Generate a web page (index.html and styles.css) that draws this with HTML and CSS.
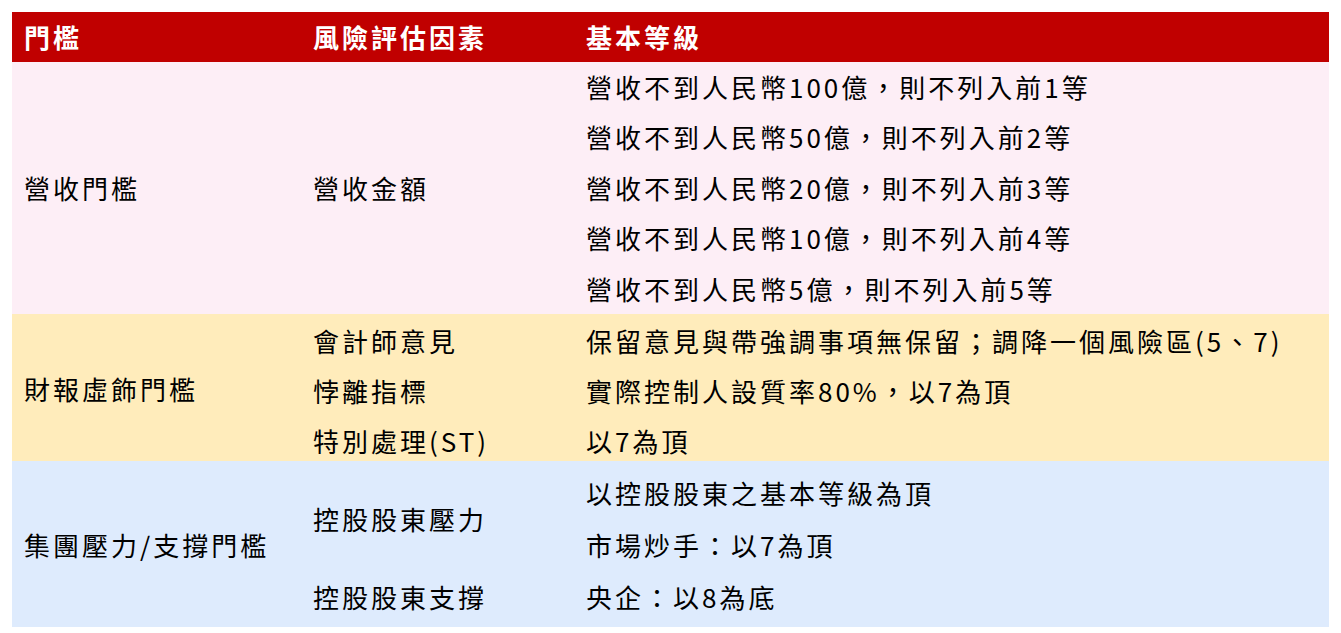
FILE: index.html
```html
<!DOCTYPE html>
<html lang="zh-Hant">
<head>
<meta charset="utf-8">
<title>門檻</title>
<link rel="stylesheet" href="styles.css">
</head>
<body>
<div class="table">
  <div class="sec head">
    <div class="cell c1">門檻</div>
    <div class="cell c2">風險評估因素</div>
    <div class="cell c3">基本等級</div>
  </div>
  <div class="sec pink">
    <div class="cell c1 span-all">營收門檻</div>
    <div class="cell c2 span-all">營收金額</div>
    <div class="cell c3">營收不到人民幣100億，則不列入前1等</div>
    <div class="cell c3">營收不到人民幣50億，則不列入前2等</div>
    <div class="cell c3">營收不到人民幣20億，則不列入前3等</div>
    <div class="cell c3">營收不到人民幣10億，則不列入前4等</div>
    <div class="cell c3">營收不到人民幣5億，則不列入前5等</div>
  </div>
  <div class="sec yellow">
    <div class="cell c1 span-all">財報虛飾門檻</div>
    <div class="cell c2 r1">會計師意見</div>
    <div class="cell c3 r1">保留意見與帶強調事項無保留；調降一個風險區(5、7)</div>
    <div class="cell c2 r2">悖離指標</div>
    <div class="cell c3 r2">實際控制人設質率80%，以7為頂</div>
    <div class="cell c2 r3">特別處理(ST)</div>
    <div class="cell c3 r3">以7為頂</div>
  </div>
  <div class="sec blue">
    <div class="cell c1 span-all">集團壓力/支撐門檻</div>
    <div class="cell c2 r12">控股股東壓力</div>
    <div class="cell c2 r3">控股股東支撐</div>
    <div class="cell c3 r1">以控股股東之基本等級為頂</div>
    <div class="cell c3 r2">市場炒手：以7為頂</div>
    <div class="cell c3 r3">央企：以8為底</div>
  </div>
</div>
</body>
</html>
```

FILE: styles.css
```css
html, body {
  margin: 0;
  padding: 0;
  background: #ffffff;
}
body {
  padding: 12px;
  font-family: "Noto Sans CJK TC", "Noto Sans", sans-serif;
  font-size: 26px;
  color: #000000;
  letter-spacing: 3px;
}
.table {
  width: 1317px;
}
.sec {
  display: grid;
  grid-template-columns: 289px 273px 1fr;
}
.cell {
  white-space: nowrap;
}
.c1 { grid-column: 1; padding-left: 12px; }
.c2 { grid-column: 2; padding-left: 12px; }
.c3 { grid-column: 3; padding-left: 12px; }
.span-all {
  grid-row: 1 / -1;
  align-self: center;
}
.head {
  background: #c00000;
  color: #ffffff;
  font-weight: bold;
  height: 50px;
  line-height: 50px;
}
.pink {
  background: #fdeef6;
  grid-template-rows: repeat(5, 50.4px);
}
.pink .c3 {
  line-height: 50.4px;
}
.yellow {
  background: #ffecbb;
  padding-top: 2px;
  grid-template-rows: 50px 50px 45px;
}
.yellow .r1, .yellow .r2, .yellow .r3 {
  line-height: 50px;
  align-self: start;
}
.blue {
  background: #deebfd;
  padding-top: 6px;
  padding-bottom: 4px;
  grid-template-rows: 52px 52px 52px;
}
.blue .r1, .blue .r2, .blue .r3 {
  line-height: 52px;
}
.r1 { grid-row: 1; }
.r2 { grid-row: 2; }
.r3 { grid-row: 3; }
.r12 { grid-row: 1 / 3; align-self: center; }
```
